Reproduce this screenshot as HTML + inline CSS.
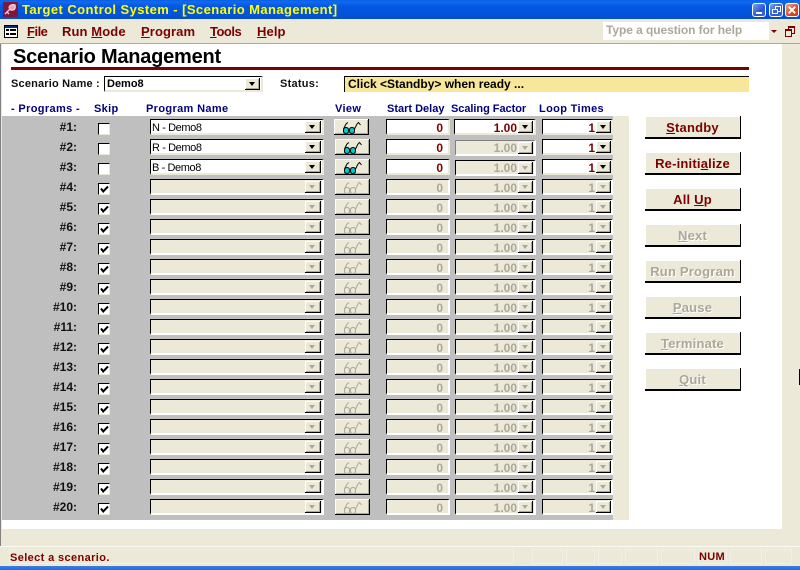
<!DOCTYPE html>
<html><head><meta charset="utf-8"><title>Target Control System</title>
<style>
html,body{margin:0;padding:0;background:#ece9d8}
#a{position:relative;width:800px;height:570px;overflow:hidden;background:#ece9d8;font-family:"Liberation Sans",sans-serif;font-size:11px}
#a div,#a b,#a i,#a span,#a svg{position:absolute;display:block}
#a i,#a b{font-style:normal}
#a u{text-decoration:underline}
.t{white-space:nowrap}
#tb{left:0;top:0;width:800px;height:19px;background:linear-gradient(#0a5fe0 0,#0f6af2 2px,#0558e2 6px,#0354dd 13px,#0351d6 17px,#0a4fc4 19px)}
#ttl{left:22px;top:1px;color:#ff0;font:bold 13px/17px "Liberation Sans",sans-serif;letter-spacing:.42px;white-space:nowrap}
.wb{top:3px;width:12px;height:12px;border:1px solid #fff;border-radius:3px;background:linear-gradient(135deg,#7ea0ee,#2a55d0 60%,#3a6ae0)}
.mn{top:23px;color:#7b0000;font:bold 13px/17px "Liberation Sans",sans-serif;white-space:nowrap;letter-spacing:.1px}
.hd{top:102px;color:#00007f;font:bold 11px/14px "Liberation Sans",sans-serif;white-space:nowrap;letter-spacing:.35px}
.r{left:0;width:630px;height:20px}
.n{right:553px;top:0;font:bold 12px/16px "Liberation Sans",sans-serif;color:#111;white-space:nowrap}
.k{left:98px;top:4px;width:10px;height:10px;background:#fff;border:1px solid #000;border-right-color:#ece9d8;border-bottom-color:#ece9d8}
.k svg{left:1px;top:1px;width:9px;height:9px}
.f{background:#fff;border-top:1px solid #000;border-left:1px solid #000;border-right:2px solid #ece9d8;border-bottom:2px solid #ece9d8;box-sizing:border-box;height:16px;color:#000}
.d{background:#ece9d8;border-right-color:#fff;border-bottom-color:#fff}
.cb{left:150px;top:0;width:174px;font:11px/17px "Liberation Sans",sans-serif;padding-left:1px;white-space:nowrap;letter-spacing:-.4px}
.btn{position:absolute;right:1px;top:1px;width:16px;height:12px;background:#ece9d8;border-right:1px solid #000;border-bottom:1px solid #000;box-shadow:inset 1px 1px 0 #fff,inset -1px -1px 0 #aca899;box-sizing:border-box;display:block}
.btn:after{content:"";position:absolute;left:4px;top:4px;border:3px solid transparent;border-bottom:0;border-top:4px solid #000}
.d .btn:after{border-top-color:#aca899}
.v{left:335px;top:0;width:35px;height:16px;background:#ece9d8;border-right:1px solid #000;border-bottom:1px solid #000;box-shadow:inset 1px 1px 0 #fff,inset -1px -1px 0 #aca899;box-sizing:border-box}
.v svg{left:8px;top:2px;width:20px;height:13px}
.sd,.sf,.lt{top:0;font:bold 12px/17px "Liberation Sans",sans-serif;color:#7b0000;text-align:right;white-space:nowrap}
.sd{left:386px;width:64px;padding-right:5px}
.sf{left:455px;width:81px;padding-right:17px}
.lt{left:542px;width:71px;padding-right:16px}
.sf .btn,.lt .btn{width:15px}
.lt .btn{right:0}
.d.sd,.d.sf,.d.lt{color:#aca899}
.b{left:645px;width:96px;height:23px;box-sizing:border-box;background:#ece9d8;border-right:1px solid #000;border-bottom:2px solid #000;text-align:center;font:bold 13px/23px "Liberation Sans",sans-serif;color:#7b0000;letter-spacing:.2px;white-space:nowrap;box-shadow:inset 1px 1px 0 #fff}
.b.x{color:#aca899;text-shadow:1px 1px 0 #fff}
.p{top:549px;height:15px;border:1px solid #f2f0e6;box-sizing:border-box}
</style></head><body>
<svg width="0" height="0" style="position:absolute"><defs>
<symbol id="g" viewBox="0 0 20 13"><path d="M1.5 9 Q1.5 6.5 4 6.5 Q6.5 6.5 6.5 9 V10 Q6.5 12.5 4 12.5 Q1.5 12.5 1.5 10 Z" fill="#0cc" stroke="#000"/><path d="M7.5 9 Q7.5 6.5 10 6.5 Q12.5 6.5 12.5 9 V10 Q12.5 12.5 10 12.5 Q7.5 12.5 7.5 10 Z" fill="#0cc" stroke="#000"/><path d="M1.5 8 L4 3 L6 1.5 M12.5 8 L15 3 L16.5 1.5 L18.5 4" fill="none" stroke="#000"/></symbol>
<symbol id="h" viewBox="0 0 20 13"><path d="M1.5 9 Q1.5 6.5 4 6.5 Q6.5 6.5 6.5 9 V10 Q6.5 12.5 4 12.5 Q1.5 12.5 1.5 10 Z" fill="none" stroke="#aca899"/><path d="M7.5 9 Q7.5 6.5 10 6.5 Q12.5 6.5 12.5 9 V10 Q12.5 12.5 10 12.5 Q7.5 12.5 7.5 10 Z" fill="none" stroke="#aca899"/><path d="M1.5 8 L4 3 L6 1.5 M12.5 8 L15 3 L16.5 1.5 L18.5 4" fill="none" stroke="#aca899"/></symbol>
<symbol id="c" viewBox="0 0 9 9"><path d="M1 3.5 L3.2 6.5 L8 1.5" fill="none" stroke="#000" stroke-width="2"/></symbol>
</defs></svg>
<div id="a">
<div id="tb"></div>
<svg style="left:3px;top:2px;width:15px;height:15px" viewBox="0 0 15 15"><rect width="15" height="15" fill="#7d1a3a"/><path d="M2 12 L7 7 M4 10 L6 12 M6 5 Q8 2 12 3 Q13 7 10 8 Q7 9 6 5" fill="#e6a0c0" stroke="#f4c8dc" stroke-width="1.4"/></svg>
<div id="ttl">Target Control System - [Scenario Management]</div>
<div class="wb" style="left:752px"><div style="left:3px;top:8px;width:6px;height:2px;background:#fff"></div></div>
<div class="wb" style="left:769px"><div style="left:5px;top:2px;width:4px;height:4px;border:1px solid #fff"></div><div style="left:2px;top:5px;width:4px;height:3px;border:1px solid #fff;background:#3a62d6"></div></div>
<div class="wb" style="left:785px;background:linear-gradient(135deg,#eea58a,#d8492a 60%,#c83a1a)"><svg style="left:1px;top:1px;width:10px;height:10px" viewBox="0 0 11 11"><path d="M2 2 L9 9 M9 2 L2 9" stroke="#fff" stroke-width="2"/></svg></div>
<div style="left:4px;top:25px;width:12px;height:11px;border:1px solid #000;background:#fff"><div style="left:0;top:0;width:12px;height:2px;background:#0a2a80"></div><div style="left:1px;top:3px;width:3px;height:2px;background:#000"></div><div style="left:5px;top:3px;width:6px;height:2px;background:#000"></div><div style="left:1px;top:7px;width:3px;height:2px;background:#000"></div><div style="left:5px;top:7px;width:6px;height:2px;background:#000"></div></div>
<div class="mn" style="left:27px;letter-spacing:-.5px"><u>F</u>ile</div>
<div class="mn" style="left:62px">Run <u>M</u>ode</div>
<div class="mn" style="left:141px"><u>P</u>rogram</div>
<div class="mn" style="left:210px;letter-spacing:-.5px"><u>T</u>ools</div>
<div class="mn" style="left:257px"><u>H</u>elp</div>
<div style="left:603px;top:22px;width:178px;height:18px;background:#fff"></div>
<div class="t" style="left:606px;top:22px;color:#aca899;font:bold 12px/16px 'Liberation Sans',sans-serif;letter-spacing:-.07px">Type a question for help</div>
<div style="left:769px;top:22px;width:12px;height:18px;background:#ece9d8"></div>
<div style="left:771px;top:30px;border:3px solid transparent;border-bottom:0;border-top:3px solid #7b0000;width:0;height:0"></div>
<div style="left:788px;top:26px;width:5px;height:5px;border:1px solid #7b0000;border-top-width:2px"></div>
<div style="left:785px;top:29px;width:5px;height:5px;border:1px solid #7b0000;border-top-width:2px;background:#ece9d8"></div>

<div style="left:0;top:43px;width:800px;height:1px;background:#aca899"></div>
<div style="left:0;top:44px;width:1px;height:502px;background:#808080"></div>
<div style="left:1px;top:44px;width:1px;height:502px;background:#ece9d8"></div>
<div style="left:2px;top:44px;width:780px;height:485px;background:#fff"></div>

<div class="t" style="left:13px;top:46px;font:bold 20px/23px 'Liberation Sans',sans-serif;color:#000;letter-spacing:-.23px">Scenario Management</div>
<div style="left:11px;top:67px;width:738px;height:3px;background:#7b0000"></div>
<div class="t" style="left:11px;top:77px;font:bold 11px/14px 'Liberation Sans',sans-serif;color:#111;letter-spacing:.18px">Scenario Name :</div>
<i class="f" style="position:absolute;display:block;left:104px;top:76px;width:159px;height:16px;font:bold 11px/15px 'Liberation Sans',sans-serif;padding-left:2px;border-right-color:#ece9d8">Demo8<span class="btn" style="right:1px;top:1px;width:15px"></span></i>
<div class="t" style="left:280px;top:77px;font:bold 11px/14px 'Liberation Sans',sans-serif;color:#111;letter-spacing:.25px">Status:</div>
<div style="left:344px;top:76px;width:405px;height:16px;background:#f7e79a;border-top:1px solid #000;border-left:1px solid #000;box-sizing:border-box"></div>
<div class="t" style="left:348px;top:77px;font:bold 12px/15px 'Liberation Sans',sans-serif;color:#000;letter-spacing:0">Click &lt;Standby&gt; when ready ...</div>

<div class="hd" style="left:11px">- Programs -</div>
<div class="hd" style="left:94px">Skip</div>
<div class="hd" style="left:146px">Program Name</div>
<div class="hd" style="left:335px">View</div>
<div class="hd" style="left:387px;letter-spacing:0">Start Delay</div>
<div class="hd" style="left:451px;letter-spacing:-.05px">Scaling Factor</div>
<div class="hd" style="left:539px">Loop Times</div>

<div style="left:2px;top:116px;width:611px;height:404px;background:#bfbfbf"></div>
<div style="left:613px;top:116px;width:16px;height:404px;background:#ece9d8"></div>

<div class="r" style="top:119px"><b class="n">#1:</b><i class="k"></i><i class="cb f">N - Demo8<span class="btn"></span></i><i class="v" style="left:334px"><svg><use href="#g"/></svg></i><i class="sd f">0</i><i class="sf f" style="left:454px;width:82px">1.00<span class="btn"></span></i><i class="lt f">1<span class="btn"></span></i></div>
<div class="r" style="top:139px"><b class="n">#2:</b><i class="k"></i><i class="cb f">R - Demo8<span class="btn"></span></i><i class="v"><svg><use href="#g"/></svg></i><i class="sd f">0</i><i class="sf f d" style="top:1px;border-top-color:#808080;border-left-color:#808080;line-height:15px">1.00<span class="btn"></span></i><i class="lt f">1<span class="btn"></span></i></div>
<div class="r" style="top:159px"><b class="n">#3:</b><i class="k"></i><i class="cb f">B - Demo8<span class="btn"></span></i><i class="v"><svg><use href="#g"/></svg></i><i class="sd f">0</i><i class="sf f d" style="top:1px;line-height:15px">1.00<span class="btn"></span></i><i class="lt f">1<span class="btn"></span></i></div>
<div class="r" style="top:179px"><b class="n">#4:</b><i class="k"><svg><use href="#c"/></svg></i><i class="cb f d"><span class="btn"></span></i><i class="v"><svg><use href="#h"/></svg></i><i class="sd f d">0</i><i class="sf f d">1.00<span class="btn"></span></i><i class="lt f d">1<span class="btn"></span></i></div>
<div class="r" style="top:199px"><b class="n">#5:</b><i class="k"><svg><use href="#c"/></svg></i><i class="cb f d"><span class="btn"></span></i><i class="v"><svg><use href="#h"/></svg></i><i class="sd f d">0</i><i class="sf f d">1.00<span class="btn"></span></i><i class="lt f d">1<span class="btn"></span></i></div>
<div class="r" style="top:219px"><b class="n">#6:</b><i class="k"><svg><use href="#c"/></svg></i><i class="cb f d"><span class="btn"></span></i><i class="v"><svg><use href="#h"/></svg></i><i class="sd f d">0</i><i class="sf f d">1.00<span class="btn"></span></i><i class="lt f d">1<span class="btn"></span></i></div>
<div class="r" style="top:239px"><b class="n">#7:</b><i class="k"><svg><use href="#c"/></svg></i><i class="cb f d"><span class="btn"></span></i><i class="v"><svg><use href="#h"/></svg></i><i class="sd f d">0</i><i class="sf f d">1.00<span class="btn"></span></i><i class="lt f d">1<span class="btn"></span></i></div>
<div class="r" style="top:259px"><b class="n">#8:</b><i class="k"><svg><use href="#c"/></svg></i><i class="cb f d"><span class="btn"></span></i><i class="v"><svg><use href="#h"/></svg></i><i class="sd f d">0</i><i class="sf f d">1.00<span class="btn"></span></i><i class="lt f d">1<span class="btn"></span></i></div>
<div class="r" style="top:279px"><b class="n">#9:</b><i class="k"><svg><use href="#c"/></svg></i><i class="cb f d"><span class="btn"></span></i><i class="v"><svg><use href="#h"/></svg></i><i class="sd f d">0</i><i class="sf f d">1.00<span class="btn"></span></i><i class="lt f d">1<span class="btn"></span></i></div>
<div class="r" style="top:299px"><b class="n">#10:</b><i class="k"><svg><use href="#c"/></svg></i><i class="cb f d"><span class="btn"></span></i><i class="v"><svg><use href="#h"/></svg></i><i class="sd f d">0</i><i class="sf f d">1.00<span class="btn"></span></i><i class="lt f d">1<span class="btn"></span></i></div>
<div class="r" style="top:319px"><b class="n">#11:</b><i class="k"><svg><use href="#c"/></svg></i><i class="cb f d"><span class="btn"></span></i><i class="v"><svg><use href="#h"/></svg></i><i class="sd f d">0</i><i class="sf f d">1.00<span class="btn"></span></i><i class="lt f d">1<span class="btn"></span></i></div>
<div class="r" style="top:339px"><b class="n">#12:</b><i class="k"><svg><use href="#c"/></svg></i><i class="cb f d"><span class="btn"></span></i><i class="v"><svg><use href="#h"/></svg></i><i class="sd f d">0</i><i class="sf f d">1.00<span class="btn"></span></i><i class="lt f d">1<span class="btn"></span></i></div>
<div class="r" style="top:359px"><b class="n">#13:</b><i class="k"><svg><use href="#c"/></svg></i><i class="cb f d"><span class="btn"></span></i><i class="v"><svg><use href="#h"/></svg></i><i class="sd f d">0</i><i class="sf f d">1.00<span class="btn"></span></i><i class="lt f d">1<span class="btn"></span></i></div>
<div class="r" style="top:379px"><b class="n">#14:</b><i class="k"><svg><use href="#c"/></svg></i><i class="cb f d"><span class="btn"></span></i><i class="v"><svg><use href="#h"/></svg></i><i class="sd f d">0</i><i class="sf f d">1.00<span class="btn"></span></i><i class="lt f d">1<span class="btn"></span></i></div>
<div class="r" style="top:399px"><b class="n">#15:</b><i class="k"><svg><use href="#c"/></svg></i><i class="cb f d"><span class="btn"></span></i><i class="v"><svg><use href="#h"/></svg></i><i class="sd f d">0</i><i class="sf f d">1.00<span class="btn"></span></i><i class="lt f d">1<span class="btn"></span></i></div>
<div class="r" style="top:419px"><b class="n">#16:</b><i class="k"><svg><use href="#c"/></svg></i><i class="cb f d"><span class="btn"></span></i><i class="v"><svg><use href="#h"/></svg></i><i class="sd f d">0</i><i class="sf f d">1.00<span class="btn"></span></i><i class="lt f d">1<span class="btn"></span></i></div>
<div class="r" style="top:439px"><b class="n">#17:</b><i class="k"><svg><use href="#c"/></svg></i><i class="cb f d"><span class="btn"></span></i><i class="v"><svg><use href="#h"/></svg></i><i class="sd f d">0</i><i class="sf f d">1.00<span class="btn"></span></i><i class="lt f d">1<span class="btn"></span></i></div>
<div class="r" style="top:459px"><b class="n">#18:</b><i class="k"><svg><use href="#c"/></svg></i><i class="cb f d"><span class="btn"></span></i><i class="v"><svg><use href="#h"/></svg></i><i class="sd f d">0</i><i class="sf f d">1.00<span class="btn"></span></i><i class="lt f d">1<span class="btn"></span></i></div>
<div class="r" style="top:479px"><b class="n">#19:</b><i class="k"><svg><use href="#c"/></svg></i><i class="cb f d"><span class="btn"></span></i><i class="v"><svg><use href="#h"/></svg></i><i class="sd f d">0</i><i class="sf f d">1.00<span class="btn"></span></i><i class="lt f d">1<span class="btn"></span></i></div>
<div class="r" style="top:499px"><b class="n">#20:</b><i class="k"><svg><use href="#c"/></svg></i><i class="cb f d"><span class="btn"></span></i><i class="v"><svg><use href="#h"/></svg></i><i class="sd f d">0</i><i class="sf f d">1.00<span class="btn"></span></i><i class="lt f d">1<span class="btn"></span></i></div>

<div class="b" style="top:116px"><u>S</u>tandby</div>
<div class="b" style="top:152px">Re-initi<u>a</u>lize</div>
<div class="b" style="top:188px">All <u>U</u>p</div>
<div class="b x" style="top:224px"><u>N</u>ext</div>
<div class="b x" style="top:260px">Run Program</div>
<div class="b x" style="top:296px"><u>P</u>ause</div>
<div class="b x" style="top:332px"><u>T</u>erminate</div>
<div class="b x" style="top:368px"><u>Q</u>uit</div>

<div style="left:799px;top:369px;width:1px;height:16px;background:#000"></div>

<div style="left:0;top:546px;width:800px;height:1px;background:#fbfaf4"></div>
<div class="p" style="left:9px;width:505px"></div>
<div class="p" style="left:532px;width:31px"></div>
<div class="p" style="left:566px;width:29px"></div>
<div class="p" style="left:598px;width:24px"></div>
<div class="p" style="left:625px;width:33px"></div>
<div class="p" style="left:661px;width:34px"></div>
<div class="p" style="left:698px;width:29px"></div>
<div class="p" style="left:730px;width:32px"></div>
<div class="p" style="left:765px;width:27px"></div>
<div class="t" style="left:10px;top:551px;color:#7b0000;font:bold 11px/14px 'Liberation Sans',sans-serif;letter-spacing:.38px">Select a scenario.</div>
<div class="t" style="left:699px;top:550px;color:#7b0000;font:bold 11px/14px 'Liberation Sans',sans-serif;letter-spacing:.3px">NUM</div>
<div style="left:0;top:566px;width:800px;height:4px;background:linear-gradient(#3c7fe0,#2a68d4)"></div>
</div>
</body></html>
